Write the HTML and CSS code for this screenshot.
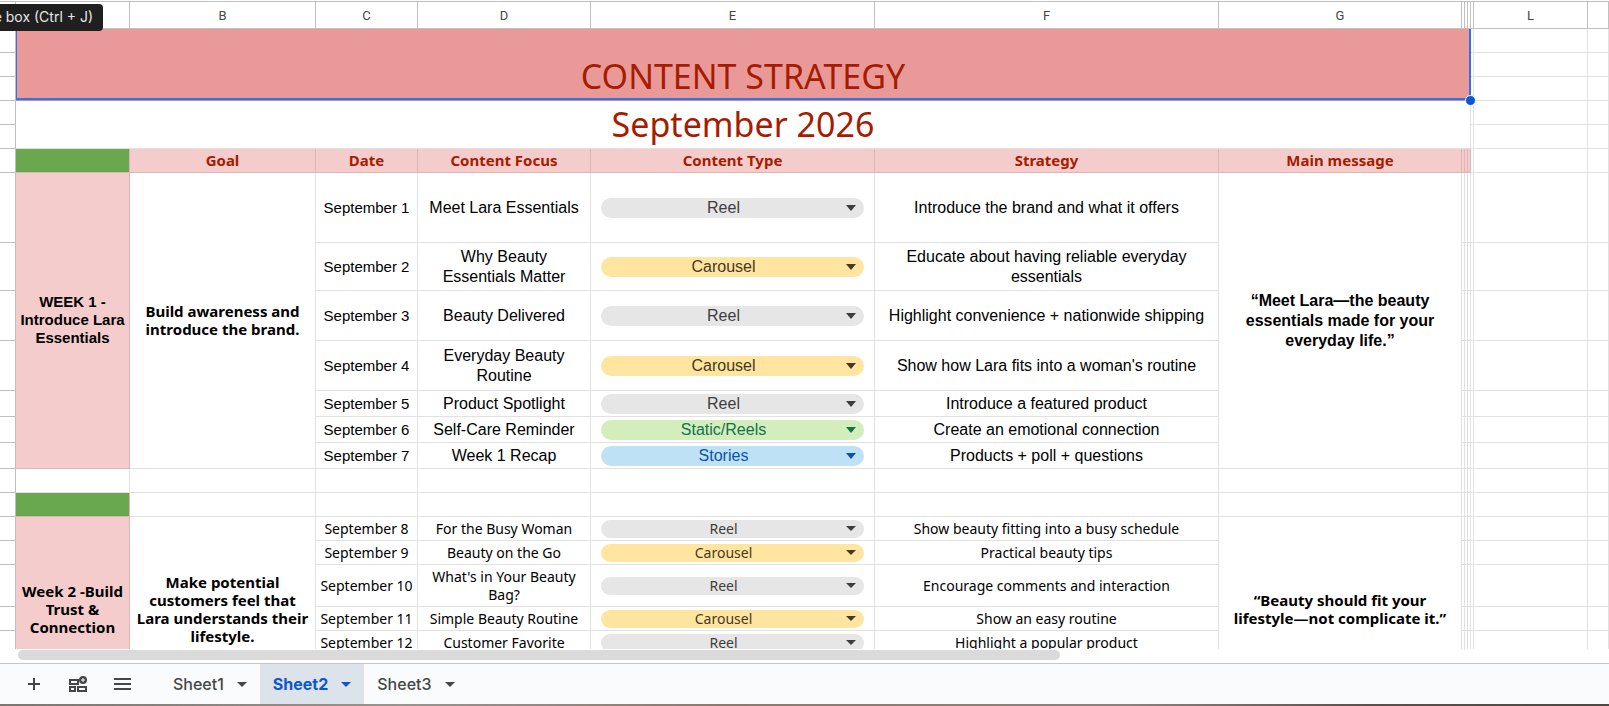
FILE: index.html
```html
<!DOCTYPE html>
<html lang="en">
  <head>
    <meta charset="utf-8" />
    <meta name="viewport" content="width=device-width, initial-scale=1.0" />
    <title>Content Strategy</title>
    <link rel="stylesheet" href="styles.css">
  </head>
  <body>
    <main class="grid">
      <table>
        <colgroup>
          <col class="rownum"><col class="a"><col class="b"><col class="c"><col class="d"><col class="e"><col class="f"><col class="g"><col class="thin"><col class="thin"><col class="thin"><col class="thin"><col class="l"><col>
        </colgroup>
        <thead>
          <tr><th></th><th></th><th>B</th><th>C</th><th>D</th><th>E</th><th>F</th><th>G</th><th></th><th></th><th></th><th></th><th>L</th><th></th></tr>
        </thead>
        <tbody>
          <tr class="h24"><th></th><td class="title selected" colspan="10" rowspan="3">CONTENT STRATEGY</td><td></td><td></td><td></td></tr>
          <tr class="h24"><th></th><td></td><td></td><td></td></tr>
          <tr class="h24"><th></th><td></td><td></td><td></td></tr>
          <tr class="h24"><th></th><td class="title" colspan="10" rowspan="2">September 2026</td><td></td><td></td><td></td></tr>
          <tr class="h24"><th></th><td></td><td></td><td></td></tr>
          <tr class="h24 heads"><th></th><td class="green"></td><td>Goal</td><td>Date</td><td>Content Focus</td><td>Content Type</td><td>Strategy</td><td>Main message</td><td></td><td></td><td></td><td class="plain"></td><td class="plain"></td><td class="plain"></td></tr>
        </tbody>
        <tbody class="week1">
          <tr class="h70">
            <th></th>
            <td class="week" rowspan="7">WEEK 1 - Introduce Lara Essentials</td>
            <td class="goal" rowspan="7">Build awareness and introduce the brand.</td>
            <td class="date">September 1</td><td class="focus">Meet Lara Essentials</td>
            <td><label class="chip"><select aria-label="Content type, September 1"><option>Reel</option></select></label></td>
            <td>Introduce the brand and what it offers</td>
            <td class="message" rowspan="7">“Meet Lara—the beauty essentials made for your everyday life.”</td>
            <td></td><td></td><td></td><td></td><td></td><td></td>
          </tr>
          <tr class="h48">
            <th></th><td class="date">September 2</td><td class="focus">Why Beauty Essentials Matter</td>
            <td><label class="chip yellow"><select aria-label="Content type, September 2"><option>Carousel</option></select></label></td>
            <td>Educate about having reliable everyday essentials</td>
            <td></td><td></td><td></td><td></td><td></td><td></td>
          </tr>
          <tr class="h50">
            <th></th><td class="date">September 3</td><td class="focus">Beauty Delivered</td>
            <td><label class="chip"><select aria-label="Content type, September 3"><option>Reel</option></select></label></td>
            <td>Highlight convenience + nationwide shipping</td>
            <td></td><td></td><td></td><td></td><td></td><td></td>
          </tr>
          <tr class="h50">
            <th></th><td class="date">September 4</td><td class="focus">Everyday Beauty Routine</td>
            <td><label class="chip yellow"><select aria-label="Content type, September 4"><option>Carousel</option></select></label></td>
            <td>Show how Lara fits into a woman's routine</td>
            <td></td><td></td><td></td><td></td><td></td><td></td>
          </tr>
          <tr class="h26">
            <th></th><td class="date">September 5</td><td class="focus">Product Spotlight</td>
            <td><label class="chip"><select aria-label="Content type, September 5"><option>Reel</option></select></label></td>
            <td>Introduce a featured product</td>
            <td></td><td></td><td></td><td></td><td></td><td></td>
          </tr>
          <tr class="h26">
            <th></th><td class="date">September 6</td><td class="focus">Self-Care Reminder</td>
            <td><label class="chip mint"><select aria-label="Content type, September 6"><option>Static/Reels</option></select></label></td>
            <td>Create an emotional connection</td>
            <td></td><td></td><td></td><td></td><td></td><td></td>
          </tr>
          <tr class="h26">
            <th></th><td class="date">September 7</td><td class="focus">Week 1 Recap</td>
            <td><label class="chip blue"><select aria-label="Content type, September 7"><option>Stories</option></select></label></td>
            <td>Products + poll + questions</td>
            <td></td><td></td><td></td><td></td><td></td><td></td>
          </tr>
        </tbody>
        <tbody class="week2">
          <tr class="h24"><th></th><td></td><td></td><td></td><td></td><td></td><td></td><td></td><td></td><td></td><td></td><td></td><td></td><td></td></tr>
          <tr class="h24"><th></th><td class="green"></td><td></td><td></td><td></td><td></td><td></td><td></td><td></td><td></td><td></td><td></td><td></td><td></td></tr>
          <tr class="h24">
            <th></th>
            <td class="week" rowspan="7">Week 2 -Build Trust &amp; Connection</td>
            <td class="goal" rowspan="7">Make potential customers feel that Lara understands their lifestyle.</td>
            <td>September 8</td><td class="focus">For the Busy Woman</td>
            <td><label class="chip"><select aria-label="Content type, September 8"><option>Reel</option></select></label></td>
            <td>Show beauty fitting into a busy schedule</td>
            <td class="message" rowspan="7">“Beauty should fit your lifestyle—not complicate it.”</td>
            <td></td><td></td><td></td><td></td><td></td><td></td>
          </tr>
          <tr class="h24">
            <th></th><td>September 9</td><td class="focus">Beauty on the Go</td>
            <td><label class="chip yellow"><select aria-label="Content type, September 9"><option>Carousel</option></select></label></td>
            <td>Practical beauty tips</td>
            <td></td><td></td><td></td><td></td><td></td><td></td>
          </tr>
          <tr class="h42">
            <th></th><td>September 10</td><td class="focus">What's in Your Beauty Bag?</td>
            <td><label class="chip"><select aria-label="Content type, September 10"><option>Reel</option></select></label></td>
            <td>Encourage comments and interaction</td>
            <td></td><td></td><td></td><td></td><td></td><td></td>
          </tr>
          <tr class="h24">
            <th></th><td>September 11</td><td class="focus">Simple Beauty Routine</td>
            <td><label class="chip yellow"><select aria-label="Content type, September 11"><option>Carousel</option></select></label></td>
            <td>Show an easy routine</td>
            <td></td><td></td><td></td><td></td><td></td><td></td>
          </tr>
          <tr class="h24">
            <th></th><td>September 12</td><td class="focus">Customer Favorite</td>
            <td><label class="chip"><select aria-label="Content type, September 12"><option>Reel</option></select></label></td>
            <td>Highlight a popular product</td>
            <td></td><td></td><td></td><td></td><td></td><td></td>
          </tr>
          <tr class="h24"><th></th><td></td><td></td><td></td><td></td><td></td><td></td><td></td><td></td><td></td><td></td></tr>
          <tr class="h24"><th></th><td></td><td></td><td></td><td></td><td></td><td></td><td></td><td></td><td></td><td></td></tr>
        </tbody>
      </table>
    </main>
    <div class="scroll"><div class="thumb"></div></div>
    <footer class="tabs">
      <button class="icon" aria-label="Add sheet">
        <svg width="20" height="20" viewBox="0 0 20 20"><path d="M10 4v12M4 10h12" /></svg>
      </button>
      <button class="icon" aria-label="Add pre-built table">
        <svg width="20" height="20" viewBox="0 0 20 20"><path d="M2 6h8v4H2zM2 13h5v4H2zM10 13h8v4h-8z" /><circle cx="15" cy="6" r="3" /><path class="fine" d="M15 4v4M13 6h4" /></svg>
      </button>
      <button class="icon" aria-label="All sheets">
        <svg width="20" height="20" viewBox="0 0 20 20"><path d="M2 5h17M2 10h17M2 15h17" /></svg>
      </button>
      <button class="tab first">Sheet1</button>
      <button class="tab active">Sheet2</button>
      <button class="tab">Sheet3</button>
    </footer>
    <div class="strip"></div>
    <div class="tooltip">Name box (Ctrl + J)</div>
  </body>
</html>
```
FILE: styles.css
```css
html, body {
    margin: 0;
    height: 100%;
    overflow: hidden;
    background: #fff;
}
body {
    display: flex;
    flex-direction: column;
    font-family: 'Noto Sans', sans-serif;
    position: relative;
}
.grid {
    flex: 1;
    min-height: 0;
    overflow: hidden;
    padding-top: 1px;
}
table {
    width: 100%;
    table-layout: fixed;
    border-collapse: separate;
    border-spacing: 0;
}
.rownum { width: 16px; }
.a, .l { width: 114px; }
.b { width: 186px; }
.c { width: 102px; }
.d { width: 173px; }
.e { width: 284px; }
.f { width: 344px; }
.g { width: 243px; }
.thin { width: 3px; }
td, th {
    box-sizing: border-box;
    padding: 0;
    border: 0 solid #e1e1e1;
    border-width: 0 1px 1px 0;
    text-align: center;
    vertical-align: middle;
    overflow: hidden;
}
th {
    border-color: #c0c0c0;
}
thead th {
    height: 28px;
    border-top-width: 1px;
    font: 13px Roboto, sans-serif;
    color: #444746;
}
.h24 { height: 24px; }
.h26 { height: 26px; }
.h42 { height: 42px; }
.h48 { height: 48px; }
.h50 { height: 50px; }
.h70 { height: 70px; }
.title {
    color: #a61c00;
    font-size: 34px;
    line-height: 40px;
    vertical-align: bottom;
    padding-bottom: 4px;
}
.selected {
    position: relative;
    overflow: visible;
    background: #ea9999;
    border-color: #d48c8c;
}
.selected::before {
    content: "";
    position: absolute;
    inset: 0 -1px 0 0;
    border: solid #3271ea;
    border-width: 0 2px 2px 1px;
}
.selected::after {
    content: "";
    position: absolute;
    right: -6px;
    bottom: -6px;
    width: 9px;
    height: 9px;
    border: 1px solid #fff;
    border-radius: 50%;
    background: #0b57d0;
}
.heads td {
    padding-bottom: 2px;
    background: #f4cccc;
    border-color: #dcb6b6;
    color: #a61c00;
    font-weight: bold;
    font-size: 15px;
    line-height: 18px;
}
.heads .plain {
    background: #fff;
    border-color: #e1e1e1;
}
.heads .green, .green {
    background: #6aa84f;
    border-color: #dcb6b6;
}
.week1 td {
    font: 16px/20px 'Liberation Sans', Arial, sans-serif;
}
.week1 .date {
    font-size: 15px;
}
.week2 td {
    font-size: 14px;
    line-height: 18px;
}
.focus {
    padding: 0 6px;
}
.week1 .week, .week1 .goal, .week2 .week, .week2 .goal, .week2 .message {
    font-weight: bold;
    font-size: 15px;
    line-height: 18px;
    padding-bottom: 2px;
}
.week1 .goal {
    font-family: 'Noto Sans', sans-serif;
}
.goal {
    padding: 0 4px;
}
.week1 .message {
    font-weight: bold;
}
.message {
    padding: 0 12px;
}
.week {
    background: #f4cccc;
    border-color: #dcb6b6;
}
.chip {
    display: block;
    position: relative;
    height: 20px;
    margin: 0 10px;
    border-radius: 10px;
    background: #e6e6e6;
    color: #3d3d3d;
}
.chip select {
    display: block;
    width: 100%;
    height: 100%;
    padding: 0 18px 0 0;
    border: 0;
    background: none;
    color: inherit;
    font: inherit;
    text-align: center;
    text-align-last: center;
    appearance: none;
}
.chip::after {
    content: "";
    position: absolute;
    right: 8px;
    top: 7px;
    border: solid transparent;
    border-width: 6px 5px 0;
    border-top-color: currentColor;
}
.week2 .chip {
    height: 18px;
}
.week2 .chip::after {
    top: 6px;
    border-width: 5px 5px 0;
}
.yellow { background: #ffe5a0; color: #473821; }
.mint { background: #d4edbc; color: #11734b; }
.blue { background: #bfe1f6; color: #0a53a8; }
.scroll {
    height: 14px;
    border-bottom: 1px solid #c4c7c5;
    padding-left: 18px;
    flex: none;
}
.thumb {
    width: 65.5%;
    height: 10px;
    margin-top: 1px;
    border-radius: 5px;
    background: #dadada;
}
.tabs {
    flex: none;
    display: flex;
    height: 40px;
    padding-left: 12px;
    background: #f9fbfd;
}
.tabs button {
    border: 0;
    background: none;
    color: #444746;
    font: 500 16px Inter, sans-serif;
}
.tabs .icon {
    width: 44px;
    padding: 0;
}
.icon svg {
    display: block;
    margin: auto;
    fill: none;
    stroke: #444746;
    stroke-width: 2;
}
.icon circle {
    fill: #444746;
}
.icon .fine {
    stroke: #f9fbfd;
    stroke-width: 1;
}
.tabs .tab {
    display: flex;
    align-items: center;
    gap: 13px;
    padding: 0 13px;
}
.tab::after {
    content: "";
    border: solid transparent;
    border-width: 5px 5px 0;
    border-top-color: currentColor;
}
.tabs .first {
    margin-left: 16px;
}
.tabs .active {
    background: #dde3ea;
    color: #0b57d0;
    font-weight: 700;
}
.strip {
    flex: none;
    height: 2px;
    background: linear-gradient(90deg, #7d7570, #9a938e 25%, #8a7a72 45%, #8c827c 70%, #5a514c 85%, #4f4742);
}
.tooltip {
    position: absolute;
    left: -47px;
    top: 4px;
    padding: 0 10px 2px;
    border-radius: 4px;
    background: #1f1f1f;
    color: #e8e8e8;
    font: 14px/25px Inter, sans-serif;
}
```
